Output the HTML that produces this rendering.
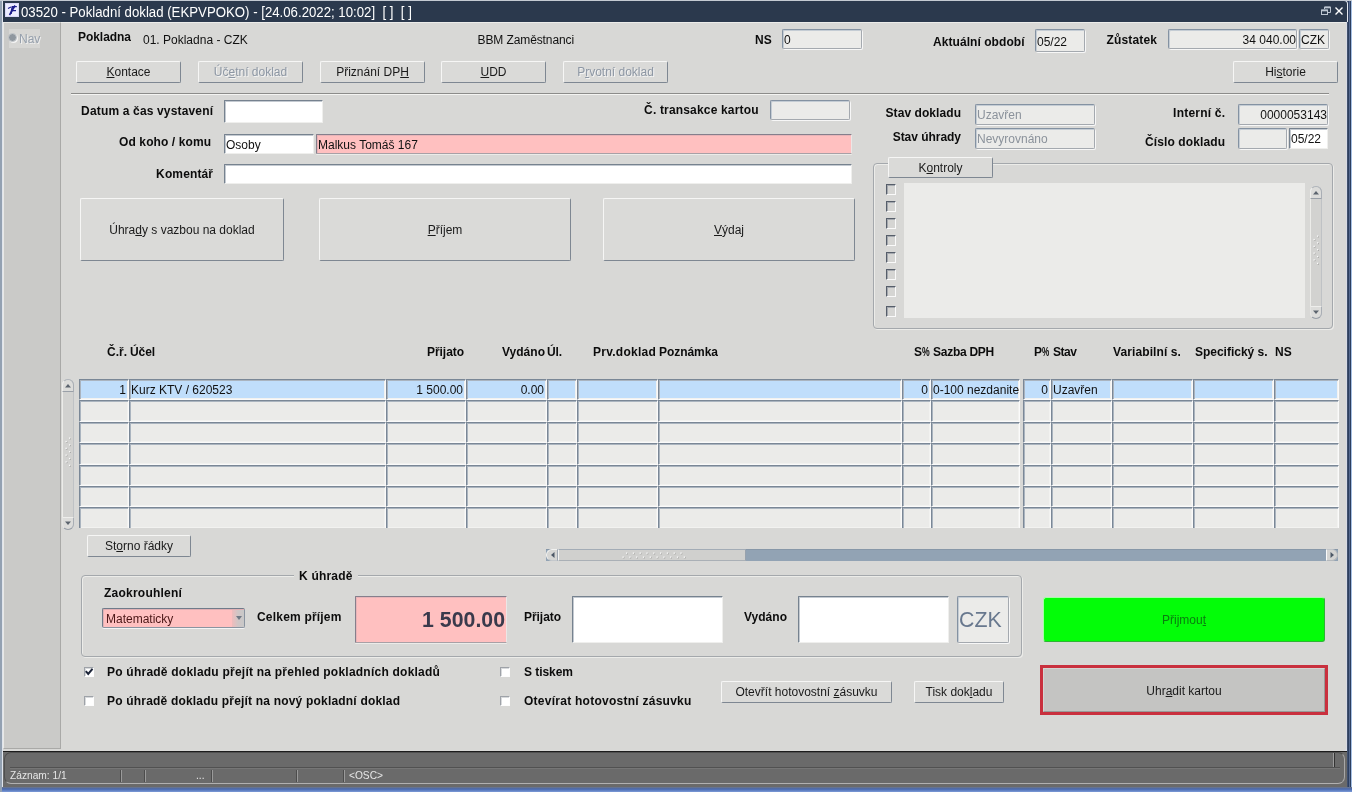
<!DOCTYPE html><html lang="cs"><head><meta charset="utf-8"><title>03520 - Pokladní doklad</title><style>
*{box-sizing:border-box;margin:0;padding:0}
html,body{width:1352px;height:792px;overflow:hidden;background:#d8d8d6}
body{position:relative;-webkit-font-smoothing:antialiased;font-family:"Liberation Sans",sans-serif;font-size:12px;color:#111;line-height:14px}
.a{position:absolute;white-space:nowrap}
.b{font-weight:bold;color:#0c0c0c;letter-spacing:0.15px}
.btn{position:absolute;background:#dadad8;border:1px solid;border-color:#f6f6f5 #7e8792 #7e8792 #f6f6f5;border-radius:2px;text-align:center;white-space:nowrap;color:#1a1a1a}
.btn.dis{color:#8d97a4;text-shadow:1px 1px 0 #f4f4f4}
.fld{position:absolute;border:1px solid;border-color:#76828f #efefed #efefed #76828f;border-radius:1px;background:#fff;white-space:nowrap;overflow:hidden;box-shadow:inset 1px 1px 0 #c4cad1}
.fld.g{background:#ebebe9;border-color:#8492a2 #a4a9af #a4a9af #8492a2;border-radius:2px;box-shadow:inset 1px 1px 0 #c4ccd4,1px 1px 0 #f7f7f7}
.fld.p{background:#ffc0c0;border-color:#857f8c #ece6e6 #a8a0a6 #857f8c;box-shadow:inset 1px 1px 0 #e8b4b8,0 1px 0 #ecece9}
.fld.r{text-align:right;padding-right:0}
.c{position:absolute;border:1px solid;border-color:#7a8796 #fafafa #fafafa #7a8796;background:#ebebe9;white-space:nowrap;overflow:hidden;box-shadow:inset 1px 1px 0 #aab4bf,inset -1px -1px 0 #f2f2f0;line-height:20px;padding:0 1px}
.c.s{background:#c0defb}
.c.r{text-align:right;padding-right:2px}
.cb{position:absolute;width:10px;height:11px;border:1px solid;border-color:#565e6a #fafafa #fafafa #565e6a;background:#d5d5d3;box-shadow:inset 1px 1px 0 #a4a8ae}
.cb.w{background:#fff;height:10px;border-color:#9ea2a8 #fdfdfd #fdfdfd #9ea2a8;box-shadow:inset 1px 1px 0 #d8dadc}
u{text-decoration:underline;text-underline-offset:0.5px;text-decoration-thickness:1px}
</style></head><body><div id="w" style="position:absolute;left:0;top:0;width:1352px;height:792px;will-change:transform">
<div class="a" style="left:0;top:0;width:1352px;height:792px;background:#dfe4ec"></div>
<div class="a" style="left:0;top:0;width:2px;height:792px;background:#93a1b2"></div>
<div class="a" style="left:1347px;top:0;width:4px;height:792px;background:linear-gradient(90deg,#54627c 0,#2d3f5f 1px,#2d3f5f 2px,#566a90 2px,#566a90 3px,#2d3f5f 3px)"></div>
<div class="a" style="left:1351px;top:0;width:1px;height:792px;background:#a6c0e4"></div>
<div class="a" style="left:0;top:0;width:1352px;height:1px;background:#c4cad2"></div>
<div class="a" style="left:3px;top:1px;width:1344px;height:21px;background:#2b394d;border-top-right-radius:3px;box-shadow:1px 0 0 #e4e8f0"></div>
<div class="a" style="left:5px;top:3px;width:14px;height:14px;background:#ececff;border:1px solid #d8d8f6;overflow:hidden"></div>
<div class="a" style="left:10px;top:3px;width:9px;color:#1c1c8c;font:italic bold 11px/14px 'Liberation Sans',sans-serif">F</div>
<svg class="a" style="left:5px;top:3px" width="14" height="14"><path d="M4.5 12L10 2.5" stroke="#1c1c8c" stroke-width="1.6"/><path d="M3 5.5l3-1.5" stroke="#1c1c8c" stroke-width="1.2"/></svg>
<div class="a" style="left:21px;top:3px;font-size:14px;line-height:18px;color:#fff;transform:scaleX(.944);transform-origin:0 0">03520 - Pokladní doklad (EKPVPOKO) - [24.06.2022; 10:02]&nbsp; [ ]&nbsp; [ ]</div>
<svg class="a" style="left:1318px;top:4px" width="28" height="14" viewBox="0 0 28 14"><g fill="none" stroke="#bcc5d1" stroke-width="1"><path d="M6.5 5V3h6v5.5h-2.500" /><path d="M6.5 3.5h6" stroke-width="1.6"/><rect x="3.500" y="6" width="6" height="4.500"/><path d="M3.500 6.500h6" stroke-width="1.600"/></g><path d="M17.500 3.500l7 7M24.500 3.500l-7 7" stroke="#fff" stroke-width="1.400" fill="none"/></svg>
<div class="a" style="left:3px;top:22px;width:1343px;height:729px;background:#d8d8d6;border-top:1px solid #ececea;border-bottom-right-radius:4px;box-shadow:1px 0 0 #d8dae4"></div>
<div class="a" style="left:3px;top:22px;width:58px;height:727px;background:#cacac8;border-left:1px solid #e8e8e6;border-top:1px solid #e8e8e6;border-right:1px solid #a9a9a7;border-bottom:1px solid #a9a9a7"></div>
<div class="a" style="left:9px;top:29px;width:31px;height:19px;background:#d6d6d4"></div>
<div class="a" style="left:8px;top:33px;width:9px;height:9px;border-radius:50%;background:#8f979f;border:1px solid #c4c8cc;box-shadow:1px 1px 0 #f4f4f4"></div>
<div class="a" style="left:19px;top:32px;color:#96a0ad;text-shadow:1px 1px 0 #eee">Nav</div>
<div class="a b" style="left:78px;top:30px;letter-spacing:-0.048px;">Pokladna</div>
<div class="a " style="left:143px;top:33px;">01. Pokladna - CZK</div>
<div class="a " style="left:477.5px;top:33px;letter-spacing:-0.1px">BBM Zaměstnanci</div>
<div class="a b" style="left:755px;top:33px;">NS</div>
<div class="fld g" style="left:782px;top:29px;width:80px;height:20px;line-height:20px;padding:0 1px;">0</div>
<div class="a b" style="right:327.442px;top:35px;letter-spacing:0.058px;">Aktuální období</div>
<div class="fld g" style="left:1035px;top:29px;width:50px;height:23px;line-height:20px;padding:0 1px;line-height:24px">05/22</div>
<div class="a b" style="left:1106.5px;top:33px;letter-spacing:0.152px;">Zůstatek</div>
<div class="fld g r" style="left:1168px;top:29px;width:129px;height:20px;line-height:20px;padding:0 0 0 1px;">34 040.00</div>
<div class="fld g" style="left:1299px;top:29px;width:30px;height:20px;line-height:20px;padding:0 1px;">CZK</div>
<div class="btn " style="left:76px;top:61px;width:105px;height:22px;line-height:21px;"><u>K</u>ontace</div>
<div class="btn dis" style="left:198px;top:61px;width:105px;height:22px;line-height:21px;">Úč<u>e</u>tní doklad</div>
<div class="btn " style="left:320px;top:61px;width:105px;height:22px;line-height:21px;">Přiznání DP<u>H</u></div>
<div class="btn " style="left:441px;top:61px;width:105px;height:22px;line-height:21px;"><u>U</u>DD</div>
<div class="btn dis" style="left:563px;top:61px;width:105px;height:22px;line-height:21px;">P<u>r</u>votní doklad</div>
<div class="btn " style="left:1233px;top:61px;width:105px;height:22px;line-height:21px;">Hi<u>s</u>torie</div>
<div class="a" style="left:71px;top:93px;width:1258px;height:2px;border-top:1px solid #8c8c8a;border-bottom:1px solid #f4f4f2"></div>
<div class="a b" style="right:1138.841px;top:104px;letter-spacing:0.159px;">Datum a čas vystavení</div>
<div class="fld " style="left:224px;top:100px;width:99px;height:23px;line-height:20px;padding:0 1px;"></div>
<div class="a b" style="right:593.332px;top:103px;letter-spacing:0.168px;">Č. transakce kartou</div>
<div class="fld g" style="left:770px;top:100px;width:80px;height:20px;line-height:20px;padding:0 1px;"></div>
<div class="a b" style="right:1140.902px;top:135px;letter-spacing:0.098px;">Od koho / komu</div>
<div class="fld " style="left:224px;top:134px;width:90px;height:20px;line-height:20px;padding:0 1px;">Osoby</div>
<div class="fld p" style="left:316px;top:134px;width:536px;height:20px;line-height:20px;padding:0 1px;">Malkus Tomáš 167</div>
<div class="a b" style="right:1138.869px;top:167px;letter-spacing:0.131px;">Komentář</div>
<div class="fld " style="left:224px;top:164px;width:628px;height:20px;line-height:20px;padding:0 1px;"></div>
<div class="a b" style="right:390.929px;top:106px;letter-spacing:0.071px;">Stav dokladu</div>
<div class="fld g" style="left:975px;top:104px;width:120px;height:21px;line-height:20px;padding:0 1px;color:#8b929b">Uzavřen</div>
<div class="a b" style="right:391.038px;top:130px;letter-spacing:-0.038px;">Stav úhrady</div>
<div class="fld g" style="left:975px;top:128px;width:120px;height:21px;line-height:20px;padding:0 1px;color:#8b929b">Nevyrovnáno</div>
<div class="a b" style="right:126.79099999999994px;top:106px;letter-spacing:0.209px;">Interní č.</div>
<div class="fld g r" style="left:1238px;top:104px;width:90px;height:21px;line-height:20px;padding:0 0 0 1px;">0000053143</div>
<div class="a b" style="right:126.89499999999998px;top:135px;letter-spacing:0.105px;">Číslo dokladu</div>
<div class="fld g" style="left:1238px;top:128px;width:49px;height:21px;line-height:20px;padding:0 1px;"></div>
<div class="fld " style="left:1289px;top:128px;width:39px;height:21px;line-height:20px;padding:0 1px;">05/22</div>
<div class="a" style="left:873px;top:163px;width:460px;height:166px;border:1px solid #a4a8ac;border-radius:4px;box-shadow:inset 1px 1px 0 #ecece9,1px 1px 0 #ecece9"></div>
<div class="btn " style="left:888px;top:157px;width:105px;height:21px;line-height:20px;">K<u>o</u>ntroly</div>
<div class="a" style="left:904px;top:183px;width:401px;height:135px;background:#ebebe9"></div>
<div class="cb" style="left:886px;top:184px"></div>
<div class="cb" style="left:886px;top:201px"></div>
<div class="cb" style="left:886px;top:218px"></div>
<div class="cb" style="left:886px;top:235px"></div>
<div class="cb" style="left:886px;top:252px"></div>
<div class="cb" style="left:886px;top:269px"></div>
<div class="cb" style="left:886px;top:286px"></div>
<div class="cb" style="left:886px;top:306px"></div>
<div class="a" style="left:1310px;top:186px;width:12px;height:133px;background:#d2d2d0;border:1px solid;border-color:#c0c3c6 #bfc2c5 #c0c3c6 #ecece9;border-radius:6px"></div>
<div class="a" style="left:1310px;top:186px;width:12px;height:13px;border:1px solid;border-color:#b0b5bb #a9aeb5 #9aa0a8 #eeeeec;border-radius:6px 6px 1px 1px;background:#dcdcda"></div>
<div class="a" style="left:1310px;top:306px;width:12px;height:13px;border:1px solid;border-color:#eeeeec #a9aeb5 #9aa0a8 #e4e4e2;border-radius:1px 1px 6px 6px;background:#dcdcda"></div>
<svg class="a" style="left:1310px;top:186px" width="12" height="133"><path d="M3 8.500l3-3.500 3 3.500z" fill="#5c646e"/><path d="M3 124.5l3 3.500 3-3.500z" fill="#5c646e"/><rect x="7.7" y="50.2" width="1.2" height="1.2" fill="#9a9a98"/><rect x="7" y="49.5" width="1.3" height="1.3" fill="#fcfcfc"/><rect x="4.2" y="53.6" width="1.2" height="1.2" fill="#9a9a98"/><rect x="3.5" y="52.9" width="1.3" height="1.3" fill="#fcfcfc"/><rect x="7.7" y="57.0" width="1.2" height="1.2" fill="#9a9a98"/><rect x="7" y="56.3" width="1.3" height="1.3" fill="#fcfcfc"/><rect x="4.2" y="60.4" width="1.2" height="1.2" fill="#9a9a98"/><rect x="3.5" y="59.7" width="1.3" height="1.3" fill="#fcfcfc"/><rect x="7.7" y="63.8" width="1.2" height="1.2" fill="#9a9a98"/><rect x="7" y="63.1" width="1.3" height="1.3" fill="#fcfcfc"/><rect x="4.2" y="67.2" width="1.2" height="1.2" fill="#9a9a98"/><rect x="3.5" y="66.5" width="1.3" height="1.3" fill="#fcfcfc"/><rect x="7.7" y="70.6" width="1.2" height="1.2" fill="#9a9a98"/><rect x="7" y="69.9" width="1.3" height="1.3" fill="#fcfcfc"/><rect x="4.2" y="74.0" width="1.2" height="1.2" fill="#9a9a98"/><rect x="3.5" y="73.3" width="1.3" height="1.3" fill="#fcfcfc"/><rect x="7.7" y="77.4" width="1.2" height="1.2" fill="#9a9a98"/><rect x="7" y="76.7" width="1.3" height="1.3" fill="#fcfcfc"/></svg>
<div class="btn " style="left:80px;top:198px;width:204px;height:63px;line-height:62px;">Úhra<u>d</u>y s vazbou na doklad</div>
<div class="btn " style="left:319px;top:198px;width:252px;height:63px;line-height:62px;"><u>P</u>říjem</div>
<div class="btn " style="left:603px;top:198px;width:252px;height:63px;line-height:62px;"><u>V</u>ýdaj</div>
<div class="a b" style="left:107px;top:345px;letter-spacing:-0.004px;">Č.ř.</div>
<div class="a b" style="left:130px;top:345px;letter-spacing:-0.103px;">Účel</div>
<div class="a b" style="left:427px;top:345px;letter-spacing:-0.053px;">Přijato</div>
<div class="a b" style="left:502px;top:345px;letter-spacing:0.017px;">Vydáno</div>
<div class="a b" style="left:547px;top:345px;letter-spacing:-0.138px;">Úl.</div>
<div class="a b" style="left:593px;top:345px;letter-spacing:0.266px;">Prv.doklad</div>
<div class="a b" style="left:659px;top:345px;letter-spacing:-0.048px;">Poznámka</div>
<div class="a b" style="left:914px;top:345px;">S<span style="display:inline-block;transform:scaleX(.72);transform-origin:0 50%">%</span></div>
<div class="a b" style="left:933px;top:345px;letter-spacing:-0.266px;">Sazba DPH</div>
<div class="a b" style="left:1034px;top:345px;">P<span style="display:inline-block;transform:scaleX(.68);transform-origin:0 50%">%</span></div>
<div class="a b" style="left:1053px;top:345px;letter-spacing:-0.474px;">Stav</div>
<div class="a b" style="left:1113px;top:345px;letter-spacing:0.104px;">Variabilní s.</div>
<div class="a b" style="left:1195px;top:345px;letter-spacing:-0.018px;">Specifický s.</div>
<div class="a b" style="left:1275px;top:345px;">NS</div>
<div class="a" style="left:76px;top:376px;width:1266px;height:152px;overflow:hidden">
<div class="c s r" style="left:3px;top:3px;width:50px;height:21px">1</div>
<div class="c s " style="left:53px;top:3px;width:257px;height:21px">Kurz KTV / 620523</div>
<div class="c s r" style="left:310px;top:3px;width:80px;height:21px">1 500.00</div>
<div class="c s r" style="left:390px;top:3px;width:81px;height:21px">0.00</div>
<div class="c s " style="left:471px;top:3px;width:30px;height:21px"></div>
<div class="c s " style="left:501px;top:3px;width:81px;height:21px"></div>
<div class="c s " style="left:582px;top:3px;width:244px;height:21px"></div>
<div class="c s r" style="left:826px;top:3px;width:29px;height:21px">0</div>
<div class="c s " style="left:855px;top:3px;width:89px;height:21px">0-100 nezdanite</div>
<div class="c s r" style="left:947px;top:3px;width:28px;height:21px">0</div>
<div class="c s " style="left:975px;top:3px;width:61px;height:21px">Uzavřen</div>
<div class="c s " style="left:1036px;top:3px;width:81px;height:21px"></div>
<div class="c s " style="left:1117px;top:3px;width:81px;height:21px"></div>
<div class="c s " style="left:1198px;top:3px;width:65px;height:21px"></div>
<div class="c  r" style="left:3px;top:24px;width:50px;height:22px"></div>
<div class="c  " style="left:53px;top:24px;width:257px;height:22px"></div>
<div class="c  r" style="left:310px;top:24px;width:80px;height:22px"></div>
<div class="c  r" style="left:390px;top:24px;width:81px;height:22px"></div>
<div class="c  " style="left:471px;top:24px;width:30px;height:22px"></div>
<div class="c  " style="left:501px;top:24px;width:81px;height:22px"></div>
<div class="c  " style="left:582px;top:24px;width:244px;height:22px"></div>
<div class="c  r" style="left:826px;top:24px;width:29px;height:22px"></div>
<div class="c  " style="left:855px;top:24px;width:89px;height:22px"></div>
<div class="c  r" style="left:947px;top:24px;width:28px;height:22px"></div>
<div class="c  " style="left:975px;top:24px;width:61px;height:22px"></div>
<div class="c  " style="left:1036px;top:24px;width:81px;height:22px"></div>
<div class="c  " style="left:1117px;top:24px;width:81px;height:22px"></div>
<div class="c  " style="left:1198px;top:24px;width:65px;height:22px"></div>
<div class="c  r" style="left:3px;top:46px;width:50px;height:21px"></div>
<div class="c  " style="left:53px;top:46px;width:257px;height:21px"></div>
<div class="c  r" style="left:310px;top:46px;width:80px;height:21px"></div>
<div class="c  r" style="left:390px;top:46px;width:81px;height:21px"></div>
<div class="c  " style="left:471px;top:46px;width:30px;height:21px"></div>
<div class="c  " style="left:501px;top:46px;width:81px;height:21px"></div>
<div class="c  " style="left:582px;top:46px;width:244px;height:21px"></div>
<div class="c  r" style="left:826px;top:46px;width:29px;height:21px"></div>
<div class="c  " style="left:855px;top:46px;width:89px;height:21px"></div>
<div class="c  r" style="left:947px;top:46px;width:28px;height:21px"></div>
<div class="c  " style="left:975px;top:46px;width:61px;height:21px"></div>
<div class="c  " style="left:1036px;top:46px;width:81px;height:21px"></div>
<div class="c  " style="left:1117px;top:46px;width:81px;height:21px"></div>
<div class="c  " style="left:1198px;top:46px;width:65px;height:21px"></div>
<div class="c  r" style="left:3px;top:67px;width:50px;height:22px"></div>
<div class="c  " style="left:53px;top:67px;width:257px;height:22px"></div>
<div class="c  r" style="left:310px;top:67px;width:80px;height:22px"></div>
<div class="c  r" style="left:390px;top:67px;width:81px;height:22px"></div>
<div class="c  " style="left:471px;top:67px;width:30px;height:22px"></div>
<div class="c  " style="left:501px;top:67px;width:81px;height:22px"></div>
<div class="c  " style="left:582px;top:67px;width:244px;height:22px"></div>
<div class="c  r" style="left:826px;top:67px;width:29px;height:22px"></div>
<div class="c  " style="left:855px;top:67px;width:89px;height:22px"></div>
<div class="c  r" style="left:947px;top:67px;width:28px;height:22px"></div>
<div class="c  " style="left:975px;top:67px;width:61px;height:22px"></div>
<div class="c  " style="left:1036px;top:67px;width:81px;height:22px"></div>
<div class="c  " style="left:1117px;top:67px;width:81px;height:22px"></div>
<div class="c  " style="left:1198px;top:67px;width:65px;height:22px"></div>
<div class="c  r" style="left:3px;top:89px;width:50px;height:21px"></div>
<div class="c  " style="left:53px;top:89px;width:257px;height:21px"></div>
<div class="c  r" style="left:310px;top:89px;width:80px;height:21px"></div>
<div class="c  r" style="left:390px;top:89px;width:81px;height:21px"></div>
<div class="c  " style="left:471px;top:89px;width:30px;height:21px"></div>
<div class="c  " style="left:501px;top:89px;width:81px;height:21px"></div>
<div class="c  " style="left:582px;top:89px;width:244px;height:21px"></div>
<div class="c  r" style="left:826px;top:89px;width:29px;height:21px"></div>
<div class="c  " style="left:855px;top:89px;width:89px;height:21px"></div>
<div class="c  r" style="left:947px;top:89px;width:28px;height:21px"></div>
<div class="c  " style="left:975px;top:89px;width:61px;height:21px"></div>
<div class="c  " style="left:1036px;top:89px;width:81px;height:21px"></div>
<div class="c  " style="left:1117px;top:89px;width:81px;height:21px"></div>
<div class="c  " style="left:1198px;top:89px;width:65px;height:21px"></div>
<div class="c  r" style="left:3px;top:110px;width:50px;height:21px"></div>
<div class="c  " style="left:53px;top:110px;width:257px;height:21px"></div>
<div class="c  r" style="left:310px;top:110px;width:80px;height:21px"></div>
<div class="c  r" style="left:390px;top:110px;width:81px;height:21px"></div>
<div class="c  " style="left:471px;top:110px;width:30px;height:21px"></div>
<div class="c  " style="left:501px;top:110px;width:81px;height:21px"></div>
<div class="c  " style="left:582px;top:110px;width:244px;height:21px"></div>
<div class="c  r" style="left:826px;top:110px;width:29px;height:21px"></div>
<div class="c  " style="left:855px;top:110px;width:89px;height:21px"></div>
<div class="c  r" style="left:947px;top:110px;width:28px;height:21px"></div>
<div class="c  " style="left:975px;top:110px;width:61px;height:21px"></div>
<div class="c  " style="left:1036px;top:110px;width:81px;height:21px"></div>
<div class="c  " style="left:1117px;top:110px;width:81px;height:21px"></div>
<div class="c  " style="left:1198px;top:110px;width:65px;height:21px"></div>
<div class="c  r" style="left:3px;top:131px;width:50px;height:22px"></div>
<div class="c  " style="left:53px;top:131px;width:257px;height:22px"></div>
<div class="c  r" style="left:310px;top:131px;width:80px;height:22px"></div>
<div class="c  r" style="left:390px;top:131px;width:81px;height:22px"></div>
<div class="c  " style="left:471px;top:131px;width:30px;height:22px"></div>
<div class="c  " style="left:501px;top:131px;width:81px;height:22px"></div>
<div class="c  " style="left:582px;top:131px;width:244px;height:22px"></div>
<div class="c  r" style="left:826px;top:131px;width:29px;height:22px"></div>
<div class="c  " style="left:855px;top:131px;width:89px;height:22px"></div>
<div class="c  r" style="left:947px;top:131px;width:28px;height:22px"></div>
<div class="c  " style="left:975px;top:131px;width:61px;height:22px"></div>
<div class="c  " style="left:1036px;top:131px;width:81px;height:22px"></div>
<div class="c  " style="left:1117px;top:131px;width:81px;height:22px"></div>
<div class="c  " style="left:1198px;top:131px;width:65px;height:22px"></div>
</div>
<div class="a" style="left:62px;top:379px;width:12px;height:151px;background:#d2d2d0;border:1px solid;border-color:#c0c3c6 #bfc2c5 #c0c3c6 #ecece9;border-radius:6px"></div>
<div class="a" style="left:62px;top:379px;width:12px;height:13px;border:1px solid;border-color:#b0b5bb #a9aeb5 #9aa0a8 #eeeeec;border-radius:6px 6px 1px 1px;background:#dcdcda"></div>
<div class="a" style="left:62px;top:517px;width:12px;height:13px;border:1px solid;border-color:#eeeeec #a9aeb5 #9aa0a8 #e4e4e2;border-radius:1px 1px 6px 6px;background:#dcdcda"></div>
<svg class="a" style="left:62px;top:379px" width="12" height="151"><path d="M3 8.500l3-3.500 3 3.500z" fill="#5c646e"/><path d="M3 142.5l3 3.500 3-3.500z" fill="#5c646e"/><rect x="7.7" y="59.2" width="1.2" height="1.2" fill="#9a9a98"/><rect x="7" y="58.5" width="1.3" height="1.3" fill="#fcfcfc"/><rect x="4.2" y="62.6" width="1.2" height="1.2" fill="#9a9a98"/><rect x="3.5" y="61.9" width="1.3" height="1.3" fill="#fcfcfc"/><rect x="7.7" y="66.0" width="1.2" height="1.2" fill="#9a9a98"/><rect x="7" y="65.3" width="1.3" height="1.3" fill="#fcfcfc"/><rect x="4.2" y="69.4" width="1.2" height="1.2" fill="#9a9a98"/><rect x="3.5" y="68.7" width="1.3" height="1.3" fill="#fcfcfc"/><rect x="7.7" y="72.8" width="1.2" height="1.2" fill="#9a9a98"/><rect x="7" y="72.1" width="1.3" height="1.3" fill="#fcfcfc"/><rect x="4.2" y="76.2" width="1.2" height="1.2" fill="#9a9a98"/><rect x="3.5" y="75.5" width="1.3" height="1.3" fill="#fcfcfc"/><rect x="7.7" y="79.6" width="1.2" height="1.2" fill="#9a9a98"/><rect x="7" y="78.9" width="1.3" height="1.3" fill="#fcfcfc"/><rect x="4.2" y="83.0" width="1.2" height="1.2" fill="#9a9a98"/><rect x="3.5" y="82.3" width="1.3" height="1.3" fill="#fcfcfc"/><rect x="7.7" y="86.4" width="1.2" height="1.2" fill="#9a9a98"/><rect x="7" y="85.7" width="1.3" height="1.3" fill="#fcfcfc"/></svg>
<div class="btn " style="left:87px;top:535px;width:104px;height:22px;line-height:21px;">St<u>o</u>rno řádky</div>
<div class="a" style="left:546px;top:549px;width:792px;height:12px;background:#92a3b4;border-top:1px solid #8797a8"></div>
<div class="a" style="left:558px;top:549px;width:188px;height:12px;background:#d0d0ce;border:1px solid;border-color:#a3acb6 #98a2ad #aab0b6 #f4f4f2"></div>
<div class="a" style="left:546px;top:549px;width:12px;height:12px;background:#d6d6d4;border:1px solid;border-color:#f2f2f0 #a0a8b2 #c4c8cc #f2f2f0;border-radius:6px 0 0 6px"></div>
<div class="a" style="left:1326px;top:549px;width:12px;height:12px;background:#d4d4d2;border:1px solid;border-color:#c0c4c8 #b4b8bc #b4b8bc #fafafa;border-radius:0 6px 6px 0"></div>
<svg class="a" style="left:546px;top:549px" width="792" height="12"><path d="M8.500 3l-3.500 3 3.500 3z" fill="#4c5866"/><path d="M784.500 3l3.500 3-3.500 3z" fill="#4c5866"/><rect x="80.7" y="4.2" width="1.2" height="1.2" fill="#9a9a98"/><rect x="80.0" y="3.5" width="1.300" height="1.300" fill="#fcfcfc"/><rect x="87.5" y="4.2" width="1.2" height="1.2" fill="#9a9a98"/><rect x="86.8" y="3.5" width="1.300" height="1.300" fill="#fcfcfc"/><rect x="94.3" y="4.2" width="1.2" height="1.2" fill="#9a9a98"/><rect x="93.6" y="3.5" width="1.300" height="1.300" fill="#fcfcfc"/><rect x="101.1" y="4.2" width="1.2" height="1.2" fill="#9a9a98"/><rect x="100.4" y="3.5" width="1.300" height="1.300" fill="#fcfcfc"/><rect x="107.9" y="4.2" width="1.2" height="1.2" fill="#9a9a98"/><rect x="107.2" y="3.5" width="1.300" height="1.300" fill="#fcfcfc"/><rect x="114.7" y="4.2" width="1.2" height="1.2" fill="#9a9a98"/><rect x="114.0" y="3.5" width="1.300" height="1.300" fill="#fcfcfc"/><rect x="121.5" y="4.2" width="1.2" height="1.2" fill="#9a9a98"/><rect x="120.8" y="3.5" width="1.300" height="1.300" fill="#fcfcfc"/><rect x="128.3" y="4.2" width="1.2" height="1.2" fill="#9a9a98"/><rect x="127.6" y="3.5" width="1.300" height="1.300" fill="#fcfcfc"/><rect x="135.1" y="4.2" width="1.2" height="1.2" fill="#9a9a98"/><rect x="134.4" y="3.5" width="1.300" height="1.300" fill="#fcfcfc"/><rect x="77.2" y="8.200" width="1.2" height="1.2" fill="#9a9a98"/><rect x="76.5" y="7.500" width="1.300" height="1.300" fill="#fcfcfc"/><rect x="84.0" y="8.200" width="1.2" height="1.2" fill="#9a9a98"/><rect x="83.3" y="7.500" width="1.300" height="1.300" fill="#fcfcfc"/><rect x="90.8" y="8.200" width="1.2" height="1.2" fill="#9a9a98"/><rect x="90.1" y="7.500" width="1.300" height="1.300" fill="#fcfcfc"/><rect x="97.6" y="8.200" width="1.2" height="1.2" fill="#9a9a98"/><rect x="96.9" y="7.500" width="1.300" height="1.300" fill="#fcfcfc"/><rect x="104.4" y="8.200" width="1.2" height="1.2" fill="#9a9a98"/><rect x="103.7" y="7.500" width="1.300" height="1.300" fill="#fcfcfc"/><rect x="111.2" y="8.200" width="1.2" height="1.2" fill="#9a9a98"/><rect x="110.5" y="7.500" width="1.300" height="1.300" fill="#fcfcfc"/><rect x="118.0" y="8.200" width="1.2" height="1.2" fill="#9a9a98"/><rect x="117.3" y="7.500" width="1.300" height="1.300" fill="#fcfcfc"/><rect x="124.8" y="8.200" width="1.2" height="1.2" fill="#9a9a98"/><rect x="124.1" y="7.500" width="1.300" height="1.300" fill="#fcfcfc"/><rect x="131.6" y="8.200" width="1.2" height="1.2" fill="#9a9a98"/><rect x="130.9" y="7.500" width="1.300" height="1.300" fill="#fcfcfc"/><rect x="138.4" y="8.200" width="1.2" height="1.2" fill="#9a9a98"/><rect x="137.7" y="7.500" width="1.300" height="1.300" fill="#fcfcfc"/></svg>
<div class="a" style="left:81px;top:575px;width:941px;height:82px;border:1px solid #a4a8ac;border-radius:4px;box-shadow:inset 1px 1px 0 #ecece9,1px 1px 0 #ecece9"></div>
<div class="a b" style="left:294px;top:569px;padding:0 5px;background:#d8d8d6;letter-spacing:0.198px">K úhradě</div>
<div class="a b" style="left:104px;top:586px;letter-spacing:0.231px;">Zaokrouhlení</div>
<div class="fld p" style="border-color:#6f7b8a #8a94a0 #8a94a0 #6f7b8a;border-radius:2px;box-shadow:inset 1px 1px 0 #e0b0b4,0 1px 0 #f4f4f4;left:102px;top:608px;width:143px;height:20px;line-height:20px;padding:0 3px;color:#4a1616">Matematicky</div>
<div class="a" style="left:232px;top:610px;width:12px;height:17px;background:linear-gradient(90deg,#f0bcbc,#cfc6c6 50%,#c8c8c8)"></div>
<svg class="a" style="left:233px;top:610px" width="12" height="16"><path d="M3 6h6l-3 4z" fill="#6f7884"/></svg>
<div class="a b" style="left:257px;top:610px;letter-spacing:0.196px;">Celkem příjem</div>
<div class="fld p r" style="left:355px;top:596px;width:152px;height:47px;line-height:20px;padding:0 0 0 1px;font-weight:bold;font-size:21.3px;color:#3a3a4c;line-height:47px;padding-right:1px">1 500.00</div>
<div class="a b" style="left:524px;top:610px;letter-spacing:-0.053px;">Přijato</div>
<div class="fld " style="left:572px;top:596px;width:151px;height:47px;line-height:20px;padding:0 1px;"></div>
<div class="a b" style="left:744px;top:610px;letter-spacing:0.017px;">Vydáno</div>
<div class="fld " style="left:798px;top:596px;width:151px;height:47px;line-height:20px;padding:0 1px;"></div>
<div class="fld g" style="left:957px;top:596px;width:52px;height:47px;line-height:20px;padding:0 1px;font-size:21.3px;color:#68788e;line-height:47px;padding:0 1px">CZK</div>
<div class="cb w" style="left:84px;top:667px"></div>
<svg class="a" style="left:84px;top:667px" width="10" height="10"><path d="M1.800 4.200l2.400 2.800L8.500 1.800" stroke="#1c2438" stroke-width="2" fill="none"/></svg>
<div class="a b" style="left:107px;top:665px;letter-spacing:0.23px;">Po úhradě dokladu přejít na přehled pokladních dokladů</div>
<div class="cb w" style="left:84px;top:696px"></div>
<div class="a b" style="left:107px;top:694px;letter-spacing:0.191px;">Po úhradě dokladu přejít na nový pokladní doklad</div>
<div class="cb w" style="left:500px;top:667px"></div>
<div class="a b" style="left:524px;top:665px;letter-spacing:-0.048px;">S tiskem</div>
<div class="cb w" style="left:500px;top:696px"></div>
<div class="a b" style="left:524px;top:694px;letter-spacing:0.256px;">Otevírat hotovostní zásuvku</div>
<div class="btn " style="left:721px;top:681px;width:171px;height:22px;line-height:21px;">Otevřít hotovostní <u>z</u>ásuvku</div>
<div class="btn " style="left:914px;top:681px;width:90px;height:22px;line-height:21px;">Tisk dok<u>l</u>adu</div>
<div class="btn " style="left:1043px;top:597px;width:282px;height:45px;line-height:44px;background:#03fd08;color:#0b7d10;border-color:#a4ffa6 #2eb434 #2eb434 #a4ffa6;border-radius:3px">Přijmou<u>t</u></div>
<div class="a" style="left:1040px;top:665px;width:288px;height:50px;background:#c9303e"></div>
<div class="btn " style="left:1043px;top:668px;width:282px;height:44px;line-height:43px;background:#c4c4c2;border-color:#d4d4d2 #9a9a98 #9a9a98 #d4d4d2;border-radius:0;line-height:45px">Uhr<u>a</u>dit kartou</div>
<div class="a" style="left:3px;top:751px;width:1344px;height:37px;background:#6a6a6a;border-top:1px solid #1c1c1c"></div>
<div class="a" style="left:4px;top:752px;width:1341px;height:32px;border:1px solid;border-color:#505050 #a8a8a8 #b0b0b0 #505050;border-radius:7px"></div>
<div class="a" style="left:10px;top:767px;width:1330px;height:2px;border-top:1px solid #515151;border-bottom:1px solid #767676"></div>
<div class="a" style="left:120px;top:770px;width:2px;height:12px;border-left:1px solid #4c4c4c;border-right:1px solid #9a9a9a"></div>
<div class="a" style="left:144px;top:770px;width:2px;height:12px;border-left:1px solid #4c4c4c;border-right:1px solid #9a9a9a"></div>
<div class="a" style="left:211px;top:770px;width:2px;height:12px;border-left:1px solid #4c4c4c;border-right:1px solid #9a9a9a"></div>
<div class="a" style="left:296px;top:770px;width:2px;height:12px;border-left:1px solid #4c4c4c;border-right:1px solid #9a9a9a"></div>
<div class="a" style="left:343px;top:770px;width:2px;height:12px;border-left:1px solid #4c4c4c;border-right:1px solid #9a9a9a"></div>
<div class="a" style="left:1333px;top:753px;width:2px;height:14px;border-left:1px solid #9c9c9c;border-right:1px solid #333"></div>
<div class="a" style="left:10px;top:769px;font-size:10.2px;color:#e6e6e6">Záznam: 1/1</div>
<div class="a" style="left:196px;top:769px;font-size:10.2px;color:#e6e6e6">...</div>
<div class="a" style="left:349px;top:769px;font-size:10.2px;color:#e6e6e6">&lt;OSC&gt;</div>
<div class="a" style="left:0;top:787px;width:1352px;height:5px;background:linear-gradient(#6f7787,#4868ae 40%,#7c9bd8)"></div>
<div class="a" style="left:0;top:786px;width:2px;height:6px;background:#93a1b2"></div>
</div></body></html>
